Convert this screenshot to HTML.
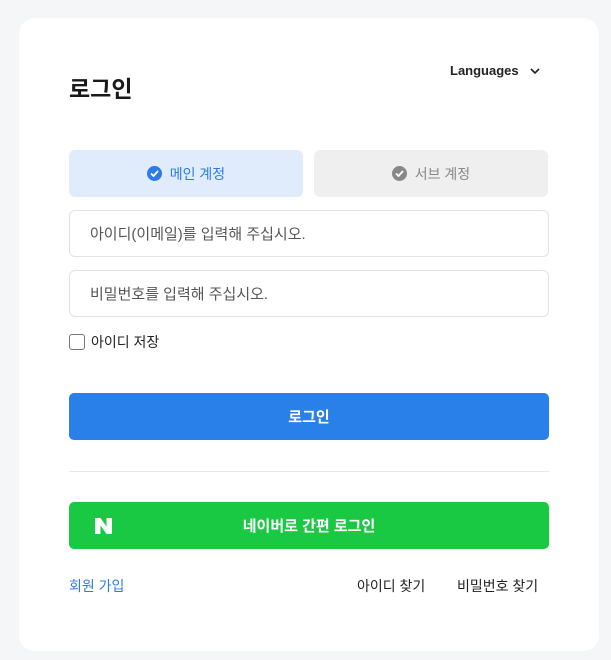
<!DOCTYPE html>
<html><head><meta charset="utf-8"><style>
*{box-sizing:border-box;margin:0;padding:0}
body{width:611px;height:660px;background:#f5f6f8;font-family:"Liberation Sans","Noto Sans CJK KR",sans-serif;position:relative;overflow:hidden}
.card{position:absolute;left:19px;top:18px;width:580px;height:633px;background:#fff;border-radius:16px}
.a{position:absolute}
.title{left:69px;top:70px;font-size:23px;font-weight:bold;color:#1a1a1a}
.lang{left:450px;top:63px;font-size:13px;font-weight:bold;color:#222}
.tab{top:150px;height:47px;width:234px;border-radius:6px;display:flex;align-items:center;justify-content:center;font-size:14px;gap:8px}
.inp{left:69px;width:480px;height:47px;border:1px solid #e1e3e6;border-radius:6px;padding-left:20px;display:flex;align-items:center;font-size:15px;color:#555}
.btn{left:69px;width:480px;height:47px;border-radius:5px;color:#fff;font-weight:bold;font-size:15px;display:flex;align-items:center;justify-content:center}
.dot{width:15px;height:15px;border-radius:50%;display:flex;align-items:center;justify-content:center}
</style></head><body>
<div class="card"></div>
<div class="a title">로그인</div>
<div class="a lang">Languages <svg width="10" height="7" style="margin-left:8px" viewBox="0 0 10 7"><path d="M1 1l4 4 4-4" stroke="#222" stroke-width="1.6" fill="none"/></svg></div>
<div class="a tab" style="left:69px;background:#e0ecfc;color:#2d7be6"><span class="dot" style="background:#2d7be6"><svg width="9" height="7" viewBox="0 0 9 7"><path d="M1 3.5l2.5 2.5L8 1" stroke="#fff" stroke-width="1.8" fill="none"/></svg></span>메인 계정</div>
<div class="a tab" style="left:314px;background:#efefef;color:#888"><span class="dot" style="background:#888"><svg width="9" height="7" viewBox="0 0 9 7"><path d="M1 3.5l2.5 2.5L8 1" stroke="#fff" stroke-width="1.8" fill="none"/></svg></span>서브 계정</div>
<div class="a inp" style="top:210px">아이디(이메일)를 입력해 주십시오.</div>
<div class="a inp" style="top:270px">비밀번호를 입력해 주십시오.</div>
<div class="a" style="left:69px;top:332px;display:flex;align-items:center;gap:6px;font-size:14px;color:#222"><span style="width:16px;height:16px;border:1px solid #777;border-radius:3px;display:inline-block"></span>아이디 저장</div>
<div class="a btn" style="top:393px;background:#2880e8">로그인</div>
<div class="a" style="left:69px;top:471px;width:480px;height:1px;background:#e8e8e8"></div>
<div class="a btn" style="top:502px;background:#19c944">네이버로 간편 로그인</div>
<svg class="a" style="left:95px;top:518px" width="17" height="16" viewBox="0 0 17 16"><path d="M0 0h5.5l6 8.5V0H17v16h-5.5l-6-8.5V16H0z" fill="#fff"/></svg>
<div class="a" style="left:69px;top:576px;font-size:14px;color:#2d7be6">회원 가입</div>
<div class="a" style="left:357px;top:576px;font-size:14px;color:#222">아이디 찾기</div>
<div class="a" style="left:457px;top:576px;font-size:14px;color:#222">비밀번호 찾기</div>
</body></html>
